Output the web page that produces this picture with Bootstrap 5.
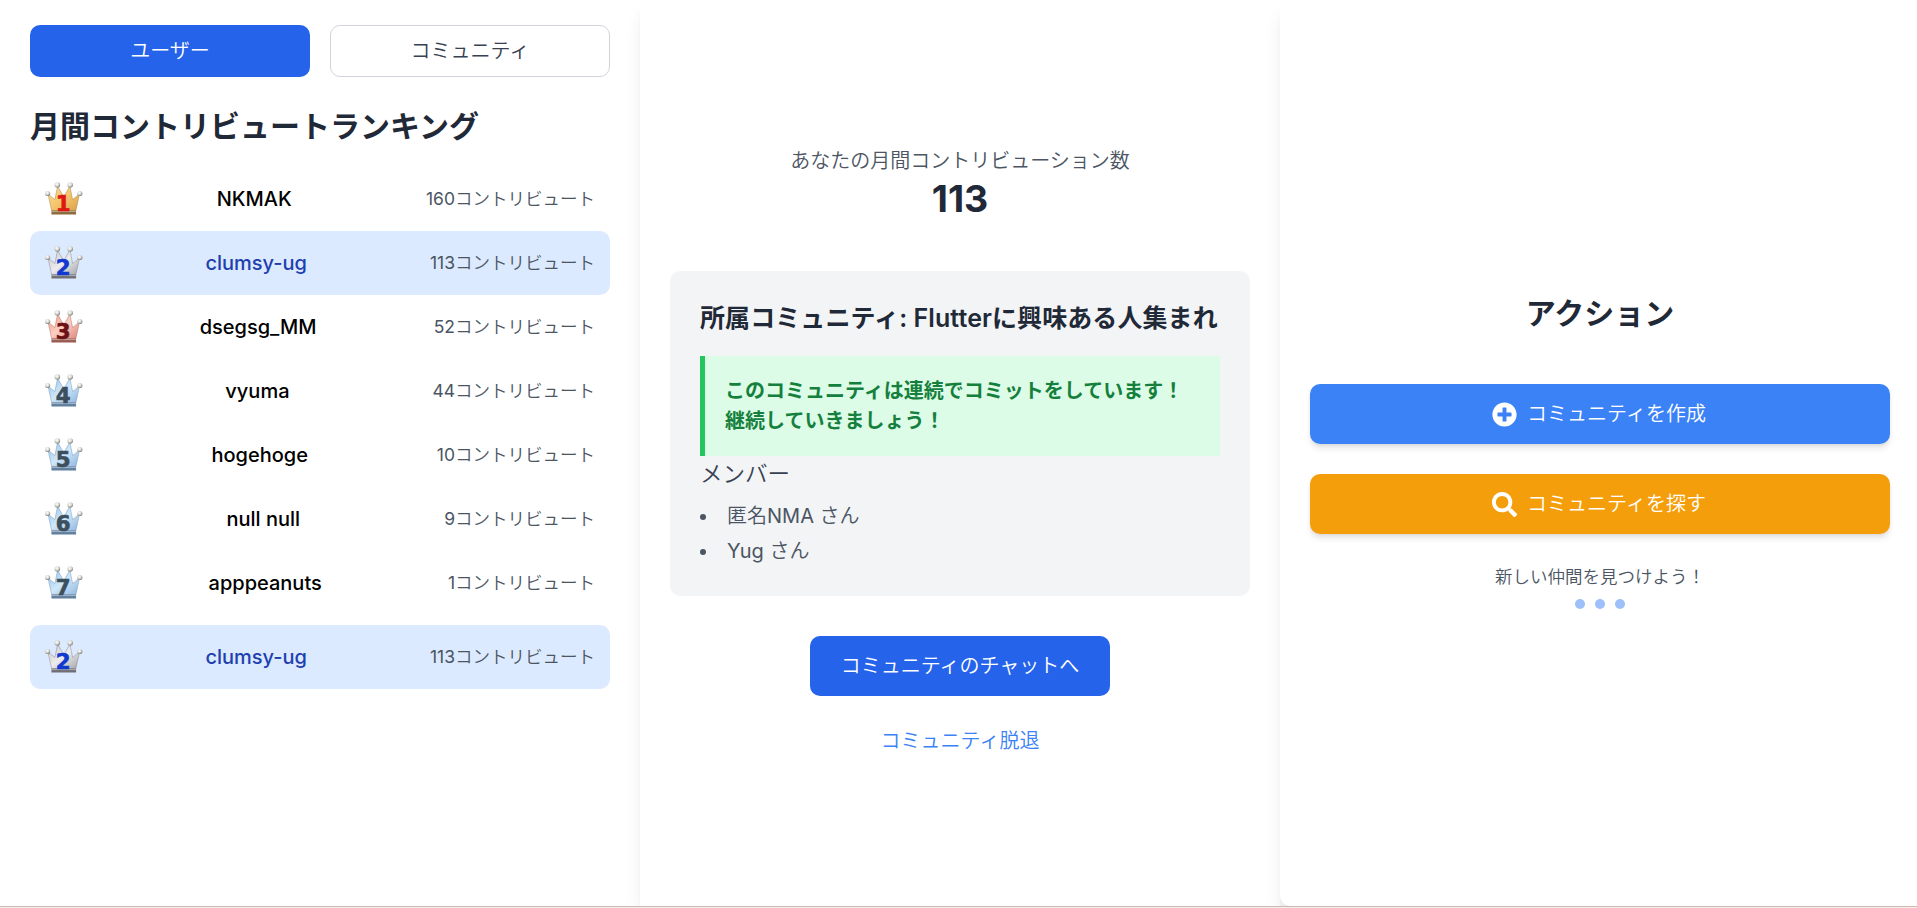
<!DOCTYPE html>
<html lang="ja">
<head>
<meta charset="utf-8">
<meta name="viewport" content="width=device-width, initial-scale=1">
<title>コントリビュートランキング</title>
<link href="https://cdn.jsdelivr.net/npm/bootstrap@5.3.0/dist/css/bootstrap.min.css" rel="stylesheet">
<style>
  body { font-family: Inter, "Noto Sans CJK JP DemiLight", "Noto Sans CJK JP Light", "Noto Sans CJK JP", sans-serif; font-size: 20px; line-height: 30px; font-weight: 400; color: #000; background: #f5eeea; overflow: hidden; }
  .board { width: 1920px; height: 907px; border-bottom: 1px solid #c9bab2; background: #fff; overflow: hidden; }
  .panel { width: 640px; padding: 0 30px 5px; background: #fff; position: relative; box-shadow: 0 12.5px 18.75px -3.75px rgba(0,0,0,.1), 0 5px 7.5px -5px rgba(0,0,0,.1); }
  .panel-rank { padding-top: 25px; box-shadow: none; }
  .panel-action { border-radius: 10px 0 0 10px; padding-bottom: 3px; }
  .tab-btn { height: 52px; border-radius: 10px; font-size: 20px; line-height: 30px; padding: 0; }
  .fill-blue, .fill-blue:hover { background: #2563eb; color: #fff; }
  .outline-gray { border: 1px solid #d1d5db; color: #374151; background: #fff; }
  .title-lg { font-family: Inter, "Noto Sans CJK JP", sans-serif; font-size: 30px; line-height: 38px; padding-bottom: 2px; font-weight: 700; color: #1f2937; margin: 0; }
  .rank-row { height: 64px; padding: 0 15px; border-radius: 10px; }
  .rank-row.mine { background: #dbeafe; }
  .rank-name { font-weight: 500; }
  .mine .rank-name { color: #1e40af; }
  .rank-count { font-size: 17.5px; line-height: 25px; color: #4b5563; padding-bottom: 1px; }
  .crown { width: 37.5px; height: 34px; display: block; }
  .crown text { font: 700 20px "DejaVu Sans", sans-serif; }
  .ink-600 { color: #4b5563; }
  .ink-700 { color: #374151; }
  .total { font-size: 37.5px; line-height: 45px; font-weight: 700; color: #1f2937; }
  .club { background: #f3f4f6; border-radius: 10px; padding: 30px; }
  .club-title { font-family: Inter, "Noto Sans CJK JP", sans-serif; font-size: 25px; line-height: 34px; padding-bottom: 1px; font-weight: 600; color: #1f2937; margin: 0 0 20px; white-space: nowrap; letter-spacing: .08px; }
  .streak { font-family: Inter, "Noto Sans CJK JP", sans-serif; background: #dcfce7; border-left: 5px solid #22c55e; padding: 20px; color: #15803d; font-weight: 700; }
  .member-title { font-size: 22.5px; line-height: 35px; font-weight: 400; margin: 0 0 10px; }
  .member-list { list-style: disc inside; padding: 0; margin: 0; }
  .member-list li + li { margin-top: 5px; }
  .chat-btn { width: 300px; height: 60px; border-radius: 10px; font-size: 20px; padding: 0; margin-top: 40px; }
  .leave-link { color: #3b82f6; margin-top: 30px; }
  .act-btn { height: 60px; border-radius: 10px; color: #fff; font-size: 20px; gap: 10px; padding: 0 2px 0 0; box-shadow: 0 5px 7.5px -1.25px rgba(0,0,0,.1), 0 2.5px 5px -2.5px rgba(0,0,0,.1); }
  .act-btn svg { width: 25px; height: 25px; }
  .act-create, .act-create:hover { background: #3b82f6; color: #fff; }
  .act-find, .act-find:hover { background: #f59e0b; color: #fff; }
  .hint { font-size: 17.5px; line-height: 25px; }
  .pulse-dot { width: 10px; height: 10px; border-radius: 50%; background: #9dc0fb; }
</style>
</head>
<body>
<svg width="0" height="0" class="position-absolute" aria-hidden="true">
  <defs>
    <linearGradient id="gold" x1="0" y1="0" x2="1" y2="1"><stop offset="0" stop-color="#f8dfa0"/><stop offset=".5" stop-color="#f6c56c"/><stop offset="1" stop-color="#d9a04a"/></linearGradient>
    <linearGradient id="silver" x1="0" y1="0" x2="1" y2="1"><stop offset="0" stop-color="#c6c6c8"/><stop offset=".5" stop-color="#ececee"/><stop offset="1" stop-color="#a4a4a8"/></linearGradient>
    <linearGradient id="bronze" x1="0" y1="0" x2="1" y2="1"><stop offset="0" stop-color="#f09c8a"/><stop offset=".5" stop-color="#fbcfc2"/><stop offset="1" stop-color="#dd8577"/></linearGradient>
    <linearGradient id="ice" x1="0" y1="0" x2="1" y2="1"><stop offset="0" stop-color="#93c3ee"/><stop offset=".5" stop-color="#cfe8fa"/><stop offset="1" stop-color="#8fb5dc"/></linearGradient>
    <radialGradient id="pearl" cx=".4" cy=".35" r=".65"><stop offset="0" stop-color="#fff"/><stop offset=".55" stop-color="#d6d6d0"/><stop offset="1" stop-color="#80807a"/></radialGradient>
  </defs>
</svg>

<main class="board d-flex">
  <section class="panel panel-rank flex-shrink-0">
    <div class="d-flex" style="gap:20px">
      <button class="btn tab-btn fill-blue flex-fill w-50 border-0">ユーザー</button>
      <button class="btn tab-btn outline-gray flex-fill w-50">コミュニティ</button>
    </div>
    <h2 class="title-lg" style="margin:30px 0 20px">月間コントリビュートランキング</h2>
    <div id="ranking"></div>
    <div id="myrank" style="margin-top:10px"></div>
  </section>

  <section class="panel flex-shrink-0 d-flex flex-column align-items-center justify-content-center">
    <div class="ink-600">あなたの月間コントリビューション数</div>
    <div class="total" style="margin-bottom:50px">113</div>
    <div class="club w-100">
      <h3 class="club-title">所属コミュニティ: Flutterに興味ある人集まれ</h3>
      <div class="streak">このコミュニティは連続でコミットをしています！<br>継続していきましょう！</div>
      <h4 class="member-title ink-700">メンバー</h4>
      <ul class="member-list ink-600">
        <li>匿名NMA さん</li>
        <li>Yug さん</li>
      </ul>
    </div>
    <button class="btn chat-btn fill-blue border-0">コミュニティのチャットへ</button>
    <a href="#" class="leave-link text-decoration-none">コミュニティ脱退</a>
  </section>

  <section class="panel panel-action flex-shrink-0 d-flex flex-column align-items-center justify-content-center">
    <h2 class="title-lg" style="margin-bottom:50px">アクション</h2>
    <button class="btn act-btn act-create border-0 w-100 d-flex align-items-center justify-content-center">
      <svg viewBox="0 0 512 512" fill="currentColor" aria-hidden="true"><path d="M256 8C119 8 8 119 8 256s111 248 248 248 248-111 248-248S393 8 256 8zm144 276c0 6.600-5.400 12-12 12h-92v92c0 6.600-5.400 12-12 12h-56c-6.600 0-12-5.400-12-12v-92h-92c-6.600 0-12-5.400-12-12v-56c0-6.600 5.400-12 12-12h92v-92c0-6.600 5.400-12 12-12h56c6.600 0 12 5.400 12 12v92h92c6.600 0 12 5.400 12 12v56z"/></svg>
      <span>コミュニティを作成</span>
    </button>
    <button class="btn act-btn act-find border-0 w-100 d-flex align-items-center justify-content-center" style="margin-top:30px">
      <svg viewBox="0 0 512 512" fill="currentColor" aria-hidden="true"><path d="M505 442.700L405.300 343c-4.500-4.500-10.600-7-17-7H372c27.600-35.300 44-79.700 44-128C416 93.100 322.900 0 208 0S0 93.100 0 208s93.100 208 208 208c48.300 0 92.700-16.400 128-44v16.300c0 6.400 2.500 12.500 7 17l99.700 99.700c9.400 9.400 24.600 9.400 33.900 0l28.300-28.300c9.400-9.400 9.400-24.600.1-34zM208 336c-70.700 0-128-57.200-128-128 0-70.700 57.200-128 128-128 70.700 0 128 57.200 128 128 0 70.700-57.200 128-128 128z"/></svg>
      <span>コミュニティを探す</span>
    </button>
    <div class="hint ink-600" style="margin-top:30px">新しい仲間を見つけよう！</div>
    <div class="d-flex" style="gap:10px;margin-top:10px">
      <span class="pulse-dot"></span><span class="pulse-dot"></span><span class="pulse-dot"></span>
    </div>
  </section>
</main>

<script src="https://cdn.jsdelivr.net/npm/bootstrap@5.3.0/dist/js/bootstrap.bundle.min.js"></script>
<script>
  const styles = {
    1: ['gold', '#dd1a12', '#8a6a3a'], 2: ['silver', '#1238d0', '#707074'], 3: ['bronze', '#6b1216', '#9a5a50'],
    ice: ['ice', '#3d4f5c', '#5f7f9f']
  };
  const crown = n => {
    const [fill, ink, edge] = styles[n] || styles.ice;
    return `<svg class="crown" viewBox="0 0 38 34" preserveAspectRatio="none">
      <path d="M3 12 L10 17.500 L12.800 4 L19 15 L25.200 4 L28 17.500 L35 12 L31.300 28.500 H6.700Z" fill="url(#${fill})" stroke="${edge}" stroke-width=".6" stroke-opacity=".65"/>
      <path d="M6.500 28.500H31.500V32.500H6.500Z" fill="${edge}"/><path d="M6.500 29.600H31.500" stroke="#fff" stroke-opacity=".45"/>
      <g fill="url(#pearl)"><circle cx="12.500" cy="3" r="2.800"/><circle cx="25.500" cy="3" r="2.800"/><circle cx="2.700" cy="11.500" r="2.600"/><circle cx="35.300" cy="11.500" r="2.600"/></g>
      <text transform="translate(18.300 29) scale(1.080 1.040)" text-anchor="middle" fill="${ink}" stroke="${ink}" stroke-width=".6">${n}</text></svg>`;
  };
  const row = ([n, name, count]) => `<div class="rank-row d-flex align-items-center justify-content-between${name === 'clumsy-ug' ? ' mine' : ''}">
      ${crown(n)}<span class="rank-name">${name}</span><span class="rank-count">${count}コントリビュート</span></div>`;
  const users = [[1,'NKMAK',160],[2,'clumsy-ug',113],[3,'dsegsg_MM',52],[4,'vyuma',44],[5,'hogehoge',10],[6,'null null',9],[7,'apppeanuts',1]];
  document.getElementById('ranking').innerHTML = users.map(row).join('');
  document.getElementById('myrank').innerHTML = row(users[1]);
</script>
</body>
</html>
